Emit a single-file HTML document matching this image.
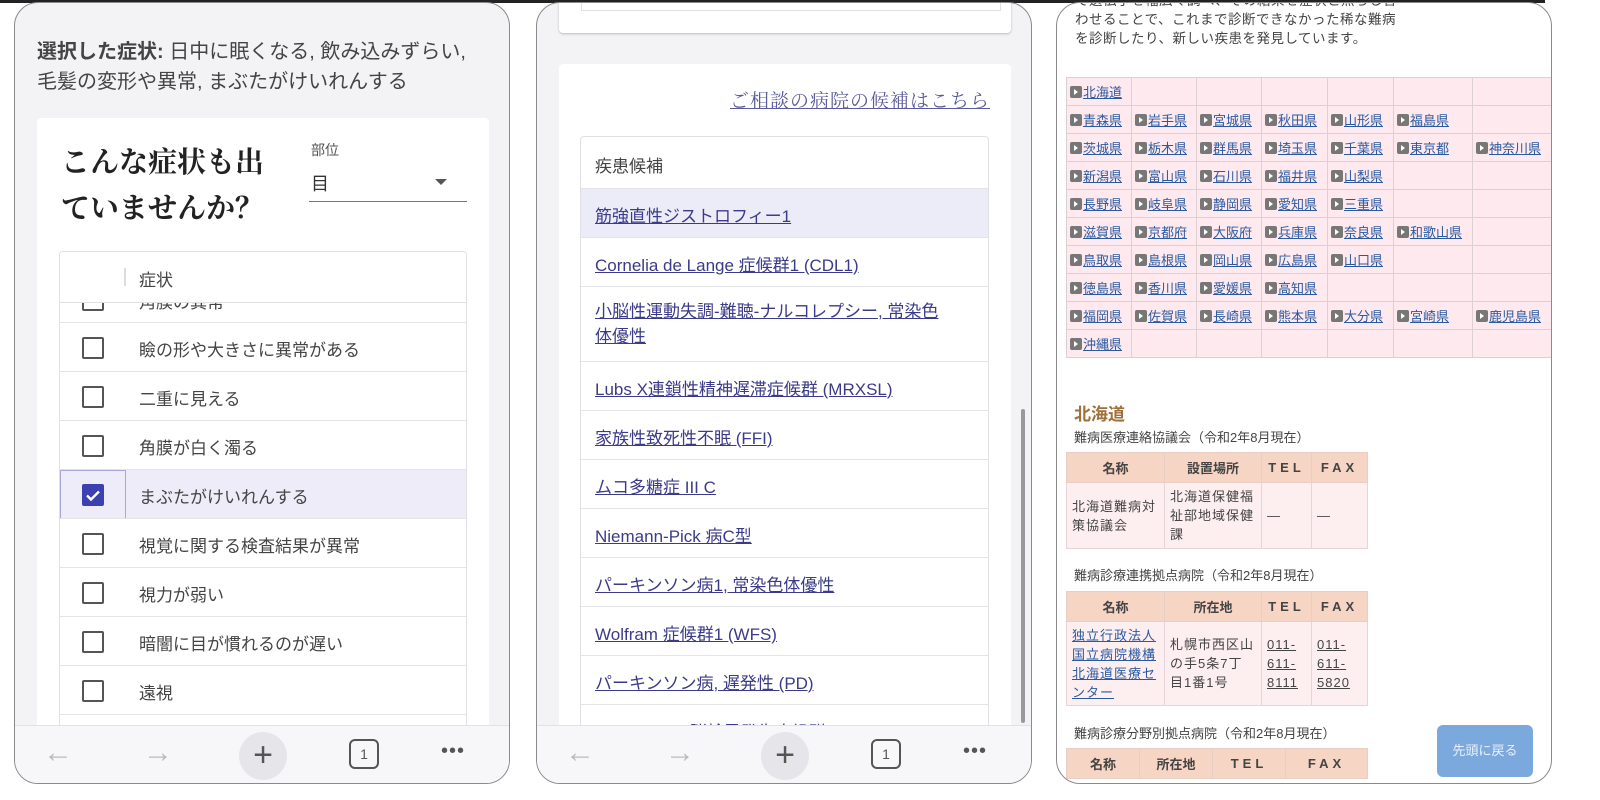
<!DOCTYPE html>
<html style="overflow:hidden;width:1600px;height:800px"><head><meta charset="utf-8"><style>
*{box-sizing:border-box;margin:0;padding:0}
body{width:1600px;height:800px;background:#fff;position:relative;overflow:hidden;font-family:"Liberation Sans","Noto Sans CJK JP",sans-serif;color:#333}
.topbar{position:absolute;left:0;top:0;width:1545px;height:3px;background:#222}
.ph{position:absolute;top:2px;height:782px;width:496px;border:1.5px solid #8a8a8a;border-radius:24px;overflow:hidden;background:#f3f3f5}
.abs{position:absolute}
.nav{position:absolute;left:0;right:0;bottom:0;height:58px;background:#f7f7f9;border-top:1px solid #e2e2e6}
.nav .i{position:absolute;top:12px;font-size:30px;color:#bbb;line-height:30px}
.plus{position:absolute;left:224px;top:6px;width:48px;height:48px;border-radius:50%;background:#e5e5ea;color:#555;font-size:34px;text-align:center;line-height:46px}
.tab{position:absolute;left:334px;top:13px;width:30px;height:30px;border:2px solid #555;border-radius:6px;font-size:14px;text-align:center;line-height:26px;color:#555}
.dots{position:absolute;left:426px;top:14px;font-size:20px;color:#555;letter-spacing:1px}
.row{position:absolute;left:0;right:0;height:49px;border-top:1px solid #e4e4e8;font-size:17px;color:#444}
.cb{position:absolute;left:22px;top:14px;width:22px;height:22px;border:2px solid #555;border-radius:2px}
.row span{position:absolute;left:79px;top:13px}
.drow{position:absolute;left:0;right:0;border-top:1px solid #e4e4e8;font-size:17px}
.drow a{position:absolute;left:14px;color:#3b3b8a;text-decoration:underline}
table{border-collapse:collapse;position:absolute;table-layout:fixed}
.pref td{border:1px solid #dcd0d3;background:#fde9ee;height:28px;font-size:13px;padding:0 0 0 3px;vertical-align:middle;white-space:nowrap;overflow:hidden}
.pref a{color:#2a5aa0;text-decoration:underline}
.ic{display:inline-block;width:12px;height:12px;background:#777;border-radius:2px;margin-right:1px;vertical-align:-1px;position:relative}
.ic:after{content:"";position:absolute;left:4px;top:3px;border-left:4px solid #fff;border-top:3px solid transparent;border-bottom:3px solid transparent}
.info th{background:#f7d5c4;border:1px solid #e8cfc3;font-size:13px;font-weight:bold;color:#444;height:30px}
.info td{background:#fdeef0;border:1px solid #e6d5d8;font-size:13px;color:#444;padding:2px 5px;line-height:19px;letter-spacing:1px}
.sp{letter-spacing:4px}
</style></head><body>
<div class="topbar"></div>

<!-- Panel 1 -->
<div class="ph" style="left:14px">
 <div class="abs" style="left:22px;top:34px;font-size:20px;line-height:30px;color:#444;width:470px;white-space:nowrap"><b>選択した症状:</b> 日中に眠くなる, 飲み込みずらい,<br>毛髪の変形や異常, まぶたがけいれんする</div>
 <div class="abs" style="left:22px;top:115px;width:452px;height:700px;background:#fff;border-radius:4px">
  <div class="abs" style="left:24px;top:22px;font-family:'Liberation Serif','Noto Serif CJK SC',serif;font-size:29px;line-height:46px;color:#222;font-weight:bold">こんな症状も出<br>ていませんか？</div>
  <div class="abs" style="left:274px;top:22px;font-size:14px;color:#555">部位</div>
  <div class="abs" style="left:274px;top:52px;font-size:18px;color:#333">目</div>
  <div class="abs" style="left:398px;top:61px;border-left:6px solid transparent;border-right:6px solid transparent;border-top:6px solid #555"></div>
  <div class="abs" style="left:272px;top:83px;width:158px;height:1px;background:#777"></div>
  <div class="abs" style="left:22px;top:133px;width:408px;height:600px;border:1px solid #e0e0e4;border-radius:4px;overflow:hidden">
   <div class="abs" style="left:0;right:0;top:0;height:51px;background:#fff;z-index:2;border-bottom:1px solid #e0e0e4">
    <div class="abs" style="left:64px;top:16px;width:2px;height:18px;background:#ddd"></div>
    <div class="abs" style="left:79px;top:14px;font-size:17px;color:#444">症状</div>
   </div>
   <div class="row" style="top:22px"><div class="cb"></div><span>角膜の異常</span></div>
   <div class="row" style="top:70px"><div class="cb"></div><span>瞼の形や大きさに異常がある</span></div>
   <div class="row" style="top:119px"><div class="cb"></div><span>二重に見える</span></div>
   <div class="row" style="top:168px"><div class="cb"></div><span>角膜が白く濁る</span></div>
   <div class="row" style="top:217px;background:#eeecf8"><div class="abs" style="left:0;top:0;width:66px;height:49px;border:1px solid #a9a6d8"></div><div class="cb" style="background:#3c40b0;border-color:#3c40b0"><svg width="18" height="18" viewBox="0 0 18 18" style="position:absolute;left:0;top:0"><path d="M3 9.5l4 4 8-8" stroke="#fff" stroke-width="2.4" fill="none"/></svg></div><span>まぶたがけいれんする</span></div>
   <div class="row" style="top:266px"><div class="cb"></div><span>視覚に関する検査結果が異常</span></div>
   <div class="row" style="top:315px"><div class="cb"></div><span>視力が弱い</span></div>
   <div class="row" style="top:364px"><div class="cb"></div><span>暗闇に目が慣れるのが遅い</span></div>
   <div class="row" style="top:413px"><div class="cb"></div><span>遠視</span></div>
   <div class="row" style="top:462px"><div class="cb"></div><span>近視</span></div>
  </div>
 </div>
 <div class="nav"><div class="i" style="left:28px">←</div><div class="i" style="left:128px">→</div><div class="plus">+</div><div class="tab">1</div><div class="dots">•••</div></div>
</div>

<!-- Panel 2 -->
<div class="ph" style="left:536px">
 <div class="abs" style="left:22px;top:-20px;width:452px;height:50px;background:#fff;border-radius:4px;box-shadow:0 1px 2px #bbb"><div class="abs" style="left:22px;top:0;width:420px;height:28px;border:1px solid #e0e0e4"></div></div>
 <div class="abs" style="left:22px;top:61px;width:452px;height:720px;background:#fff;border-radius:4px">
  <div class="abs" style="right:21px;top:22px;font-family:'Liberation Serif','Noto Serif CJK SC',serif;font-size:19px;color:#5b5b9b;text-decoration:underline;letter-spacing:1px">ご相談の病院の候補はこちら</div>
  <div class="abs" style="left:21px;top:72px;width:409px;height:700px;border:1px solid #e0e0e4;border-radius:4px;overflow:hidden">
   <div class="abs" style="left:14px;top:15px;font-size:17px;color:#444">疾患候補</div>
   <div class="drow" style="top:51px;height:50px;background:#ecebf8"><a style="top:13px">筋強直性ジストロフィー1</a></div>
   <div class="drow" style="top:100px;height:50px"><a style="top:13px">Cornelia de Lange 症候群1 (CDL1)</a></div>
   <div class="drow" style="top:149px;height:75px"><a style="top:12px;line-height:25px;width:375px">小脳性運動失調-難聴-ナルコレプシー, 常染色<br>体優性</a></div>
   <div class="drow" style="top:224px;height:50px"><a style="top:13px">Lubs X連鎖性精神遅滞症候群 (MRXSL)</a></div>
   <div class="drow" style="top:273px;height:50px"><a style="top:13px">家族性致死性不眠 (FFI)</a></div>
   <div class="drow" style="top:322px;height:50px"><a style="top:13px">ムコ多糖症 III C</a></div>
   <div class="drow" style="top:371px;height:50px"><a style="top:13px">Niemann-Pick 病C型</a></div>
   <div class="drow" style="top:420px;height:50px"><a style="top:13px">パーキンソン病1, 常染色体優性</a></div>
   <div class="drow" style="top:469px;height:50px"><a style="top:13px">Wolfram 症候群1 (WFS)</a></div>
   <div class="drow" style="top:518px;height:50px"><a style="top:13px">パーキンソン病, 遅発性 (PD)</a></div>
   <div class="drow" style="top:567px;height:50px"><a style="top:13px">Athabaskan 脳幹異発生症候群</a></div>
  </div>
 </div>
 <div class="abs" style="left:484px;top:406px;width:4px;height:314px;background:#999;border-radius:2px"></div>
 <div class="nav"><div class="i" style="left:28px">←</div><div class="i" style="left:128px">→</div><div class="plus">+</div><div class="tab">1</div><div class="dots">•••</div></div>
</div>

<!-- Panel 3 -->
<div class="ph" style="left:1056px;background:#fff">
 <div class="abs" style="left:18px;top:-12px;font-size:13.5px;line-height:19px;color:#444;letter-spacing:0.5px;white-space:nowrap">で遺伝子を幅広く調べ、その結果を症状と照らし合<br>わせることで、これまで診断できなかった稀な難病<br>を診断したり、新しい疾患を発見しています。</div>
 <table class="pref" style="left:9px;top:74px;width:486px">
  <colgroup><col style="width:65px"><col style="width:65px"><col style="width:65px"><col style="width:66px"><col style="width:66px"><col style="width:79px"><col style="width:80px"></colgroup>
  <tr><td><span class="ic"></span><a>北海道</a></td><td></td><td></td><td></td><td></td><td></td><td></td></tr>
  <tr><td><span class="ic"></span><a>青森県</a></td><td><span class="ic"></span><a>岩手県</a></td><td><span class="ic"></span><a>宮城県</a></td><td><span class="ic"></span><a>秋田県</a></td><td><span class="ic"></span><a>山形県</a></td><td><span class="ic"></span><a>福島県</a></td><td></td></tr>
  <tr><td><span class="ic"></span><a>茨城県</a></td><td><span class="ic"></span><a>栃木県</a></td><td><span class="ic"></span><a>群馬県</a></td><td><span class="ic"></span><a>埼玉県</a></td><td><span class="ic"></span><a>千葉県</a></td><td><span class="ic"></span><a>東京都</a></td><td><span class="ic"></span><a>神奈川県</a></td></tr>
  <tr><td><span class="ic"></span><a>新潟県</a></td><td><span class="ic"></span><a>富山県</a></td><td><span class="ic"></span><a>石川県</a></td><td><span class="ic"></span><a>福井県</a></td><td><span class="ic"></span><a>山梨県</a></td><td></td><td></td></tr>
  <tr><td><span class="ic"></span><a>長野県</a></td><td><span class="ic"></span><a>岐阜県</a></td><td><span class="ic"></span><a>静岡県</a></td><td><span class="ic"></span><a>愛知県</a></td><td><span class="ic"></span><a>三重県</a></td><td></td><td></td></tr>
  <tr><td><span class="ic"></span><a>滋賀県</a></td><td><span class="ic"></span><a>京都府</a></td><td><span class="ic"></span><a>大阪府</a></td><td><span class="ic"></span><a>兵庫県</a></td><td><span class="ic"></span><a>奈良県</a></td><td><span class="ic"></span><a>和歌山県</a></td><td></td></tr>
  <tr><td><span class="ic"></span><a>鳥取県</a></td><td><span class="ic"></span><a>島根県</a></td><td><span class="ic"></span><a>岡山県</a></td><td><span class="ic"></span><a>広島県</a></td><td><span class="ic"></span><a>山口県</a></td><td></td><td></td></tr>
  <tr><td><span class="ic"></span><a>徳島県</a></td><td><span class="ic"></span><a>香川県</a></td><td><span class="ic"></span><a>愛媛県</a></td><td><span class="ic"></span><a>高知県</a></td><td></td><td></td><td></td></tr>
  <tr><td><span class="ic"></span><a>福岡県</a></td><td><span class="ic"></span><a>佐賀県</a></td><td><span class="ic"></span><a>長崎県</a></td><td><span class="ic"></span><a>熊本県</a></td><td><span class="ic"></span><a>大分県</a></td><td><span class="ic"></span><a>宮崎県</a></td><td><span class="ic"></span><a>鹿児島県</a></td></tr>
  <tr><td><span class="ic"></span><a>沖縄県</a></td><td></td><td></td><td></td><td></td><td></td><td></td></tr>
 </table>
 <div class="abs" style="left:17px;top:397px;font-size:17px;font-weight:bold;color:#a0703a">北海道</div>
 <div class="abs" style="left:17px;top:424px;font-size:13px;color:#444">難病医療連絡協議会（令和2年8月現在）</div>
 <table class="info" style="left:9px;top:449px;width:302px">
  <colgroup><col style="width:98px"><col style="width:97px"><col style="width:50px"><col></colgroup>
  <tr><th>名称</th><th>設置場所</th><th class="sp">TEL</th><th class="sp">FAX</th></tr>
  <tr><td style="height:66px">北海道難病対策協議会</td><td>北海道保健福祉部地域保健課</td><td>—</td><td>—</td></tr>
 </table>
 <div class="abs" style="left:17px;top:562px;font-size:13px;color:#444">難病診療連携拠点病院（令和2年8月現在）</div>
 <table class="info" style="left:9px;top:588px;width:302px">
  <colgroup><col style="width:98px"><col style="width:97px"><col style="width:50px"><col></colgroup>
  <tr><th>名称</th><th>所在地</th><th class="sp">TEL</th><th class="sp">FAX</th></tr>
  <tr><td style="height:84px"><a style="color:#2a5aa0;text-decoration:underline">独立行政法人国立病院機構北海道医療センター</a></td><td>札幌市西区山の手5条7丁目1番1号</td><td style="text-decoration:underline">011-611-8111</td><td style="text-decoration:underline">011-611-5820</td></tr>
 </table>
 <div class="abs" style="left:17px;top:720px;font-size:13px;color:#444">難病診療分野別拠点病院（令和2年8月現在）</div>
 <table class="info" style="left:9px;top:745px;width:302px">
  <colgroup><col style="width:73px"><col style="width:73px"><col style="width:73px"><col></colgroup>
  <tr><th>名称</th><th>所在地</th><th class="sp">TEL</th><th class="sp">FAX</th></tr>
 </table>
 <div class="abs" style="left:380px;top:722px;width:96px;height:52px;background:#7ba9dd;border-radius:6px;color:#e8f0fa;font-size:13px;text-align:center;line-height:52px">先頭に戻る</div>
</div>
</body></html>
